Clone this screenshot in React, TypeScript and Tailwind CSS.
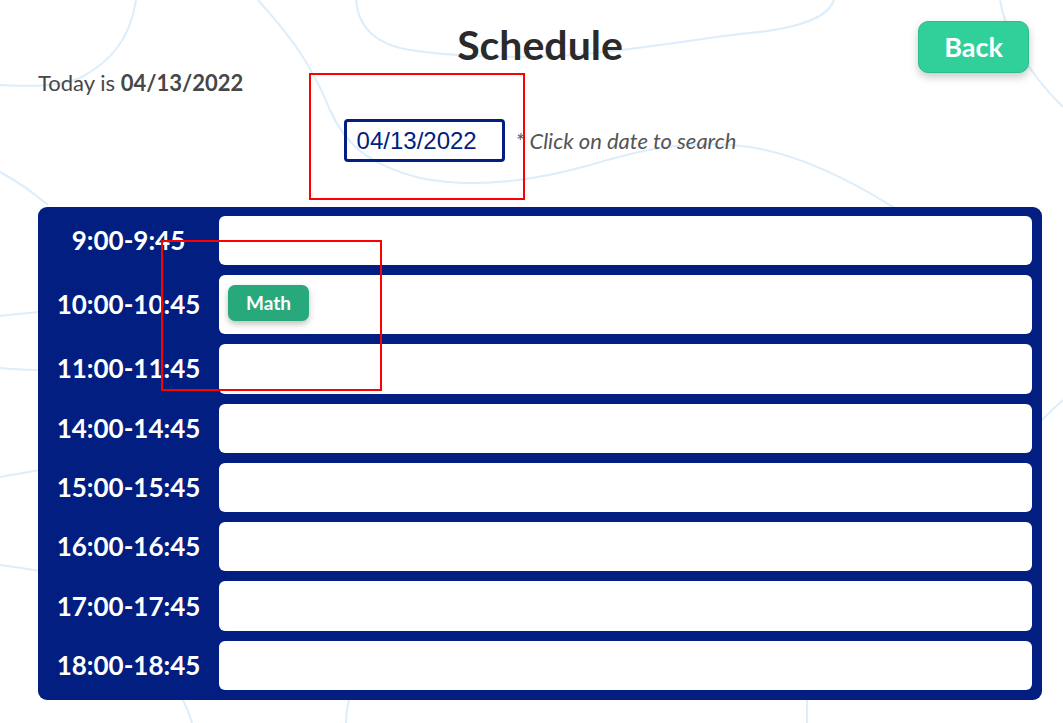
import React from "react";

const slots = [
  { time: "9:00-9:45", lessons: [] as string[] },
  { time: "10:00-10:45", lessons: ["Math"] },
  { time: "11:00-11:45", lessons: [] },
  { time: "14:00-14:45", lessons: [] },
  { time: "15:00-15:45", lessons: [] },
  { time: "16:00-16:45", lessons: [] },
  { time: "17:00-17:45", lessons: [] },
  { time: "18:00-18:45", lessons: [] },
];

function Waves() {
  return (
    <svg
      className="absolute inset-0 h-full w-full"
      viewBox="0 0 1063 723"
      preserveAspectRatio="none"
      fill="none"
      stroke="#dcedfb"
      strokeWidth="2"
    >
      <path d="M136 0 C130 40 110 62 80 78 C55 88 25 86 0 85" />
      <path d="M258 0 C285 30 310 60 330 110 C345 145 370 165 420 178 C470 188 530 182 590 165 C640 150 690 138 750 147 C800 155 850 180 893 207" />
      <path d="M356 0 C358 25 372 44 410 50 C450 56 500 58 560 56 C640 50 700 38 750 33 C800 28 828 18 834 0" />
      <path d="M1000 0 C1005 30 1025 70 1063 107" />
      <path d="M0 172 C15 180 30 190 48 205" />
      <path d="M0 316 C15 314 28 313 40 312" />
      <path d="M0 368 C15 369 28 370 40 370" />
      <path d="M0 477 C15 474 28 472 40 470" />
      <path d="M0 565 C15 567 28 569 40 571" />
      <path d="M1040 422 C1048 414 1056 406 1063 400" />
      <path d="M183 700 C187 708 190 716 192 723" />
      <path d="M349 700 C347 708 346 716 346 723" />
      <path d="M807 700 L807 723" />
    </svg>
  );
}

export default function App() {
  return (
    <div className="relative min-h-[723px] w-full overflow-hidden bg-white font-['Lato',sans-serif]">
      <Waves />

      <div className="relative pl-[38px] pr-[21px]">
        <div className="grid grid-cols-[1fr_auto_1fr] items-start">
          <div />
          <h1 className="mt-[20px] text-[41px] font-bold leading-[49px] text-[#2a2a2a]">Schedule</h1>
          <div className="flex justify-end pr-[13px] pt-[21px]">
            <button className="h-[52px] rounded-[10px] border border-[#2bbd8c] bg-[#31cf9a] px-[25px] text-[27px] font-bold text-white shadow-[0_4px_8px_rgba(0,0,0,0.22)]">
              Back
            </button>
          </div>
        </div>

        <p className="-mt-[4px] text-[22px] leading-[28px] text-[#474747]">
          Today is <span className="font-bold">04/13/2022</span>
        </p>

        <div className="mt-[22px] flex items-center justify-center gap-[11px]">
          <input
            readOnly
            value="04/13/2022"
            className="h-[43px] w-[161px] rounded-[4px] border-[3px] border-[#011e80] pl-[10px] font-['Liberation_Sans',Arial,sans-serif] text-[24px] text-[#011e80] outline-none"
          />
          <span className="text-[22px] italic text-[#555]">* Click on date to search</span>
        </div>

        <div className="mt-[45px] grid grid-cols-[181px_1fr] gap-y-[10px] rounded-[9px] bg-[#011e80] pb-[10px] pr-[10px] pt-[9px]">
          {slots.map((slot) => (
            <React.Fragment key={slot.time}>
              <div className="flex items-center justify-center text-[26px] font-bold text-white">
                {slot.time}
              </div>
              <div className="flex min-h-[49.3px] items-start gap-2 rounded-[6px] bg-white pb-[13px] pl-[9px] pt-[10px]">
                {slot.lessons.map((lesson) => (
                  <span
                    key={lesson}
                    className="flex h-[36px] items-center rounded-[7px] bg-[#27a97b] px-[18px] text-[19px] font-bold text-white shadow-[0_3px_6px_rgba(0,0,0,0.25)]"
                  >
                    {lesson}
                  </span>
                ))}
              </div>
            </React.Fragment>
          ))}
        </div>
      </div>

      <div className="pointer-events-none absolute left-[309px] top-[73px] h-[127px] w-[216px] border-2 border-[#ff0000]" />
      <div className="pointer-events-none absolute left-[161px] top-[240px] h-[151px] w-[221px] border-2 border-[#ff0000]" />
    </div>
  );
}
